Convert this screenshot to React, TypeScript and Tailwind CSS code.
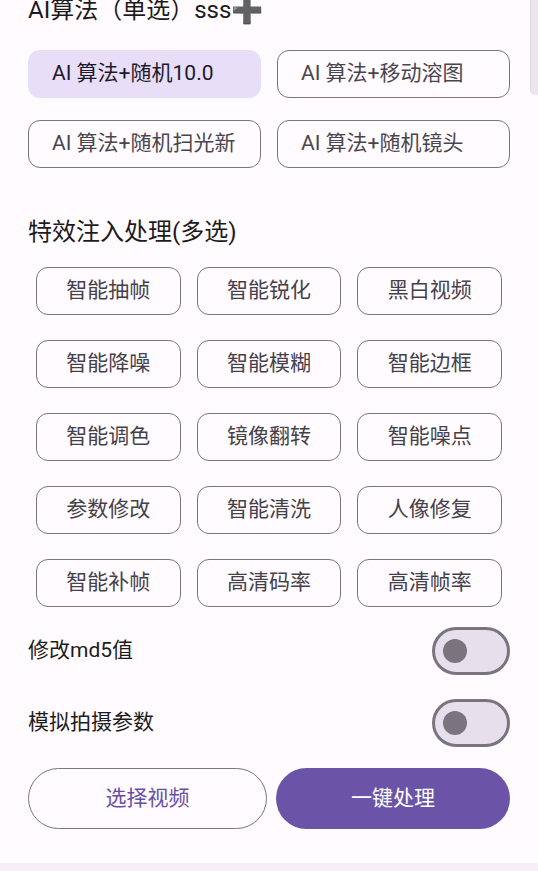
import { useState } from "react";

const algos = ["AI 算法+随机10.0", "AI 算法+移动溶图", "AI 算法+随机扫光新", "AI 算法+随机镜头"];

const effects = [
  "智能抽帧",
  "智能锐化",
  "黑白视频",
  "智能降噪",
  "智能模糊",
  "智能边框",
  "智能调色",
  "镜像翻转",
  "智能噪点",
  "参数修改",
  "智能清洗",
  "人像修复",
  "智能补帧",
  "高清码率",
  "高清帧率",
];

const Switch = ({ on, onToggle }: { on: boolean; onToggle: () => void }) => (
  <button
    type="button"
    onClick={onToggle}
    className="w-[78px] h-[48px] rounded-full border-[3px] border-[#79747e] bg-[#e7e0ec] flex items-center px-[8px]"
  >
    <span className="w-[24px] h-[24px] rounded-full bg-[#79747e]" />
  </button>
);

const App = () => {
  const [algo, setAlgo] = useState(0);
  const [md5, setMd5] = useState(false);
  const [shoot, setShoot] = useState(false);

  return (
    <div
      className="relative h-screen overflow-hidden bg-[#fffbfe] flex flex-col text-[#1d1b20]"
      style={{ fontFamily: 'Roboto, "Noto Sans CJK SC", sans-serif' }}
    >
      <div className="absolute top-0 right-0 w-[8px] h-[95px] bg-[#ebe6ed] border-l border-[#dcd7df] rounded-bl-[6px]" />

      <div className="flex flex-col px-[28px]">
        <div className="-mt-[4px] text-[24px] leading-[28px] flex items-center">
          AI算法（单选）sss
          <span className="text-[#5c5c5c] text-[26px] font-bold leading-[28px]" style={{ fontFamily: '"DejaVu Sans", sans-serif' }}>
            ➕
          </span>
        </div>

        <div className="mt-[26px] grid grid-cols-2 gap-x-4 gap-y-[22px]">
          {algos.map((a, i) => (
            <button
              key={a}
              type="button"
              onClick={() => setAlgo(i)}
              className={
                algo === i
                  ? "h-[48px] rounded-[12px] bg-[#e8def8] text-[#1d192b] text-[21px] text-left pl-[24px]"
                  : "h-[48px] rounded-[12px] border-[1.5px] border-[#79747e] text-[#49454f] text-[21px] text-left pl-[23px]"
              }
            >
              {a}
            </button>
          ))}
        </div>

        <div className="mt-[48px] text-[24px] leading-[32px]">特效注入处理(多选)</div>

        <div className="mt-[19px] px-2 grid grid-cols-3 gap-x-4 gap-y-[25px]">
          {effects.map((e) => (
            <button
              key={e}
              type="button"
              className="h-[48px] rounded-[12px] border-[1.5px] border-[#79747e] text-[#45414b] text-[21px]"
            >
              {e}
            </button>
          ))}
        </div>

        <div className="mt-[20px] flex items-center justify-between">
          <span className="text-[21px] text-[#1d1b20]">修改md5值</span>
          <Switch on={md5} onToggle={() => setMd5(!md5)} />
        </div>
        <div className="mt-[24px] flex items-center justify-between">
          <span className="text-[21px] text-[#1d1b20]">模拟拍摄参数</span>
          <Switch on={shoot} onToggle={() => setShoot(!shoot)} />
        </div>

        <div className="mt-[21px] flex gap-[9px]">
          <button
            type="button"
            className="w-[239px] h-[61px] rounded-full border-[1.5px] border-[#79747e] text-[#6750a4] text-[21px]"
          >
            选择视频
          </button>
          <button
            type="button"
            className="flex-1 h-[61px] rounded-full bg-[#6b53a8] text-white text-[21px]"
          >
            一键处理
          </button>
        </div>
      </div>

      <div className="flex-1" />
      <div className="h-[8px] bg-[#f7eef6]" />
    </div>
  );
};

export default App;
